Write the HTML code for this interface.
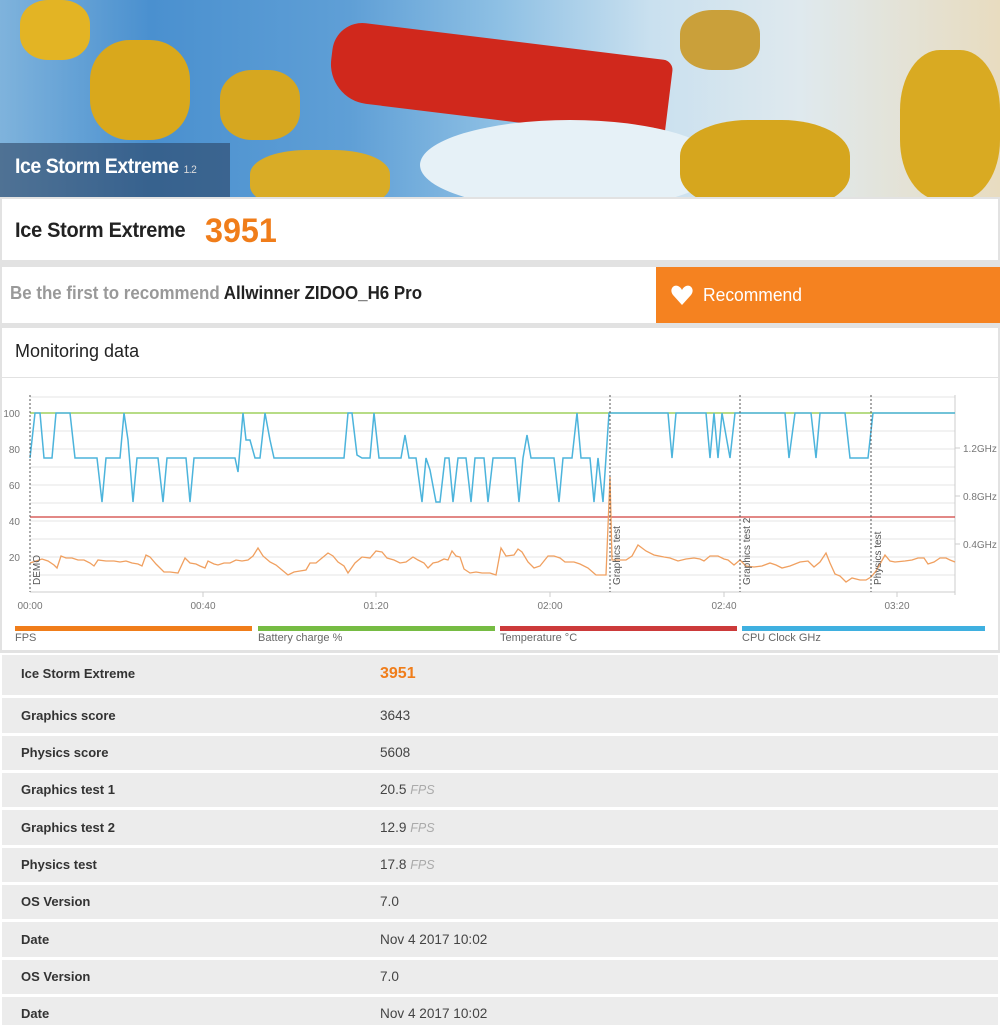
<!DOCTYPE html>
<html><head><meta charset="utf-8"><style>
*{margin:0;padding:0;box-sizing:border-box}
body{width:1000px;height:1025px;background:#e2e2e2;font-family:"Liberation Sans",sans-serif;position:relative;overflow:hidden}
.abs{position:absolute}
.nar{transform-origin:0 50%;white-space:nowrap}
.row{position:absolute;left:2px;width:996px;background:#ececec}
.row .l{position:absolute;left:19px;font-size:13px;font-weight:bold;color:#333}
.row .v{position:absolute;left:378px;font-size:13.6px;color:#444}
.row .v i{color:#aaa;font-size:12.5px}
</style></head><body>
<!-- banner -->
<div class="abs" style="left:0;top:0;width:1000px;height:197px;overflow:hidden;background:linear-gradient(90deg,#7fb3dc 0%,#4a90cf 15%,#5f9fd6 35%,#8ec0e4 50%,#c9e0ef 65%,#dfe9ee 80%,#e8dcc0 100%)">
 <div class="abs" style="left:330px;top:40px;width:340px;height:80px;background:#d0281c;border-radius:30px 10px 10px 40px;transform:rotate(7deg)"></div>
 <div class="abs" style="left:420px;top:120px;width:300px;height:90px;background:#e6f1f7;border-radius:50%"></div>
 <div class="abs" style="left:20px;top:0;width:70px;height:60px;background:#e3b424;border-radius:40%"></div>
 <div class="abs" style="left:90px;top:40px;width:100px;height:100px;background:#d9a81c;border-radius:40%"></div>
 <div class="abs" style="left:220px;top:70px;width:80px;height:70px;background:#d6a720;border-radius:40%"></div>
 <div class="abs" style="left:250px;top:150px;width:140px;height:60px;background:#d9ac26;border-radius:40%"></div>
 <div class="abs" style="left:680px;top:120px;width:170px;height:90px;background:#d6a61e;border-radius:40%"></div>
 <div class="abs" style="left:900px;top:50px;width:100px;height:150px;background:#d9aa22;border-radius:40%"></div>
 <div class="abs" style="left:680px;top:10px;width:80px;height:60px;background:#caa03a;border-radius:40%"></div>
 <div class="abs" style="left:0;top:143px;width:230px;height:54px;background:rgba(40,60,90,.55)"></div>
 <div class="abs nar" style="left:15px;top:155px;color:#fff;font-size:21px;font-weight:bold;letter-spacing:-0.5px;transform:scaleX(.93)">Ice Storm Extreme <span style="font-size:11px;font-weight:normal;color:#ddd">1.2</span></div>
</div>
<!-- score -->
<div class="abs" style="left:2px;top:199px;width:996px;height:61px;background:#fff"></div>
<div class="abs nar" style="left:15px;top:219px;font-size:21px;font-weight:bold;color:#222;letter-spacing:-0.3px;transform:scaleX(.95)">Ice Storm Extreme</div>
<div class="abs nar" style="left:205px;top:212px;font-size:34px;font-weight:bold;color:#f07d1a;transform:scaleX(.95)">3951</div>
<!-- recommend -->
<div class="abs" style="left:2px;top:267px;width:654px;height:56px;background:#fff"></div>
<div class="abs nar" style="left:10px;top:283px;font-size:18px;font-weight:bold;color:#999;transform:scaleX(.94)">Be the first to recommend <span style="color:#222">Allwinner ZIDOO_H6 Pro</span></div>
<div class="abs" style="left:656px;top:267px;width:344px;height:56px;background:#f58220"></div>
<svg class="abs" style="left:670px;top:284px" width="24" height="22" viewBox="0 0 24 22"><path d="M12 21 L3 11 C-1 6 3 0 8 2 C10 3 11 4 12 6 C13 4 14 3 16 2 C21 0 25 6 21 11 Z" fill="#fff"/></svg>
<div class="abs nar" style="left:703px;top:285px;font-size:18px;color:#fff;transform:scaleX(.97)">Recommend</div>
<!-- monitoring -->
<div class="abs" style="left:2px;top:328px;width:996px;height:322px;background:#fff"></div>
<div class="abs nar" style="left:15px;top:341px;font-size:18px;color:#222">Monitoring data</div>
<div class="abs" style="left:2px;top:377px;width:996px;height:1px;background:#e2e2e2"></div>
<svg class="abs" style="left:0;top:378px" width="1000" height="272" viewBox="0 378 1000 272" font-family="Liberation Sans, sans-serif">
 <g stroke="#e4e4e4" stroke-width="1">
  <line x1="30" y1="397" x2="955" y2="397"/><line x1="30" y1="413" x2="955" y2="413"/><line x1="30" y1="431" x2="955" y2="431"/><line x1="30" y1="449" x2="955" y2="449"/><line x1="30" y1="467" x2="955" y2="467"/><line x1="30" y1="485" x2="955" y2="485"/><line x1="30" y1="503" x2="955" y2="503"/><line x1="30" y1="521" x2="955" y2="521"/><line x1="30" y1="539" x2="955" y2="539"/><line x1="30" y1="557" x2="955" y2="557"/><line x1="30" y1="575" x2="955" y2="575"/>
 </g>
 <line x1="30" y1="592" x2="955" y2="592" stroke="#ccc"/>
 <line x1="955" y1="395" x2="955" y2="595" stroke="#ccc"/>
 <g stroke="#ccc"><line x1="203" y1="592" x2="203" y2="597"/><line x1="376" y1="592" x2="376" y2="597"/><line x1="550" y1="592" x2="550" y2="597"/><line x1="724" y1="592" x2="724" y2="597"/><line x1="897" y1="592" x2="897" y2="597"/><line x1="955" y1="448" x2="960" y2="448"/><line x1="955" y1="496" x2="960" y2="496"/><line x1="955" y1="544" x2="960" y2="544"/></g>
 <g font-size="10" fill="#777" text-anchor="end"><text x="20" y="417">100</text><text x="20" y="453">80</text><text x="20" y="489">60</text><text x="20" y="525">40</text><text x="20" y="561">20</text></g>
 <g font-size="10" fill="#777"><text x="963" y="452">1.2GHz</text><text x="963" y="500">0.8GHz</text><text x="963" y="548">0.4GHz</text></g>
 <g font-size="10" fill="#777" text-anchor="middle"><text x="30" y="609">00:00</text><text x="203" y="609">00:40</text><text x="376" y="609">01:20</text><text x="550" y="609">02:00</text><text x="724" y="609">02:40</text><text x="897" y="609">03:20</text></g>
 <line x1="30" y1="413" x2="955" y2="413" stroke="#8cc63f" stroke-width="1.2"/>
 <line x1="30" y1="517" x2="955" y2="517" stroke="#d0413f" stroke-width="1.2"/>
 <polyline fill="none" stroke="#4cb4dc" stroke-width="1.5" points="30,458 35,413 40,413 44,458 52,458 56,413 70,413 75,458 97,458 102,502 106,458 120,458 124,413 128,440 133,502 137,458 158,458 163,502 167,458 186,458 190,502 194,458 235,458 238,472 243,413 246,440 250,440 255,458 260,458 265,413 270,440 274,458 344,458 348,413 352,413 357,455 362,458 370,458 374,413 379,458 401,458 405,435 409,458 416,458 422,502 426,458 430,470 436,502 440,502 445,458 449,458 453,502 458,458 466,458 471,502 475,458 484,458 488,502 493,458 515,458 519,502 523,458 527,435 531,458 554,458 559,502 563,458 572,458 577,413 581,458 590,458 594,502 598,458 603,502 609,413 668,413 672,458 676,413 706,413 710,458 714,413 718,458 722,413 730,458 735,413 785,413 789,458 795,413 811,413 816,458 820,413 845,413 850,458 868,458 873,413 955,413"/>
 <polyline fill="none" stroke="#f0a060" stroke-width="1.3" points="30,563 36,561 42,559 48,561 54,565 57,568 61,556 66,558 72,558 78,560 84,560 90,563 94,566 98,560 106,561 114,561 120,562 126,561 132,563 138,564 142,566 146,555 150,557 156,564 164,572 170,572 178,573 185,558 190,563 196,564 200,566 205,568 208,561 214,564 218,565 224,563 230,563 236,560 242,561 248,560 253,556 258,548 263,556 270,562 276,565 282,570 288,575 294,572 300,571 306,570 310,563 316,563 322,558 328,553 333,556 338,562 344,566 348,573 355,563 362,557 370,558 376,551 382,552 387,558 394,560 400,563 406,562 413,557 418,560 424,563 428,568 433,563 438,562 444,559 448,560 452,551 456,556 460,557 464,569 470,573 476,572 482,573 490,573 496,575 501,548 506,556 514,555 518,549 522,552 528,562 534,568 540,566 548,556 554,556 560,558 565,562 568,562 574,562 580,564 588,568 596,575 602,575 606,575 610,477 612,560 618,560 626,560 632,556 638,545 646,551 654,555 664,557 670,558 678,561 686,559 694,558 700,559 704,561 710,556 718,556 724,559 728,560 734,565 740,560 746,566 754,567 762,566 770,563 776,565 782,568 790,566 800,562 808,561 814,567 820,562 826,553 830,563 835,574 840,576 846,582 852,578 860,580 866,580 871,577 876,571 880,564 885,555 890,561 895,562 905,561 912,560 918,558 924,558 928,564 934,562 940,558 946,558 950,560 955,562"/>
 <g stroke="#555" stroke-dasharray="2,2" stroke-width="1"><line x1="30" y1="395" x2="30" y2="592"/><line x1="610" y1="395" x2="610" y2="592"/><line x1="740" y1="395" x2="740" y2="592"/><line x1="871" y1="395" x2="871" y2="592"/></g>
 <g font-size="10" fill="#555"><text transform="translate(40,585) rotate(-90)">DEMO</text><text transform="translate(620,585) rotate(-90)">Graphics test</text><text transform="translate(750,585) rotate(-90)">Graphics test 2</text><text transform="translate(881,585) rotate(-90)">Physics test</text></g>
 <rect x="15" y="626" width="237" height="5" fill="#f07d1a"/><rect x="258" y="626" width="237" height="5" fill="#76bc43"/><rect x="500" y="626" width="237" height="5" fill="#cc3a3a"/><rect x="742" y="626" width="243" height="5" fill="#3fb0e0"/>
 <g font-size="11" fill="#666"><text x="15" y="641">FPS</text><text x="258" y="641">Battery charge %</text><text x="500" y="641">Temperature °C</text><text x="742" y="641">CPU Clock GHz</text></g>
</svg>
<!-- table -->
<div class="abs" style="left:0;top:653px;width:1000px;height:372px;background:#fff"></div>
<div class="row" style="top:655px;height:40px"><span class="l" style="top:11px">Ice Storm Extreme</span><span class="v" style="top:10px;font-size:16px;font-weight:bold;color:#f07d1a">3951</span></div>
<div class="row" style="top:698px;height:35px"><span class="l" style="top:10px">Graphics score</span><span class="v" style="top:10px">3643</span></div>
<div class="row" style="top:736px;height:34px"><span class="l" style="top:9px">Physics score</span><span class="v" style="top:9px">5608</span></div>
<div class="row" style="top:773px;height:34px"><span class="l" style="top:9px">Graphics test 1</span><span class="v" style="top:9px">20.5 <i>FPS</i></span></div>
<div class="row" style="top:810px;height:35px"><span class="l" style="top:10px">Graphics test 2</span><span class="v" style="top:10px">12.9 <i>FPS</i></span></div>
<div class="row" style="top:848px;height:34px"><span class="l" style="top:9px">Physics test</span><span class="v" style="top:9px">17.8 <i>FPS</i></span></div>
<div class="row" style="top:885px;height:34px"><span class="l" style="top:9px">OS Version</span><span class="v" style="top:9px">7.0</span></div>
<div class="row" style="top:922px;height:35px"><span class="l" style="top:10px">Date</span><span class="v" style="top:10px">Nov 4 2017 10:02</span></div>
<div class="row" style="top:960px;height:34px"><span class="l" style="top:9px">OS Version</span><span class="v" style="top:9px">7.0</span></div>
<div class="row" style="top:997px;height:28px"><span class="l" style="top:9px">Date</span><span class="v" style="top:9px">Nov 4 2017 10:02</span></div>
</body></html>
